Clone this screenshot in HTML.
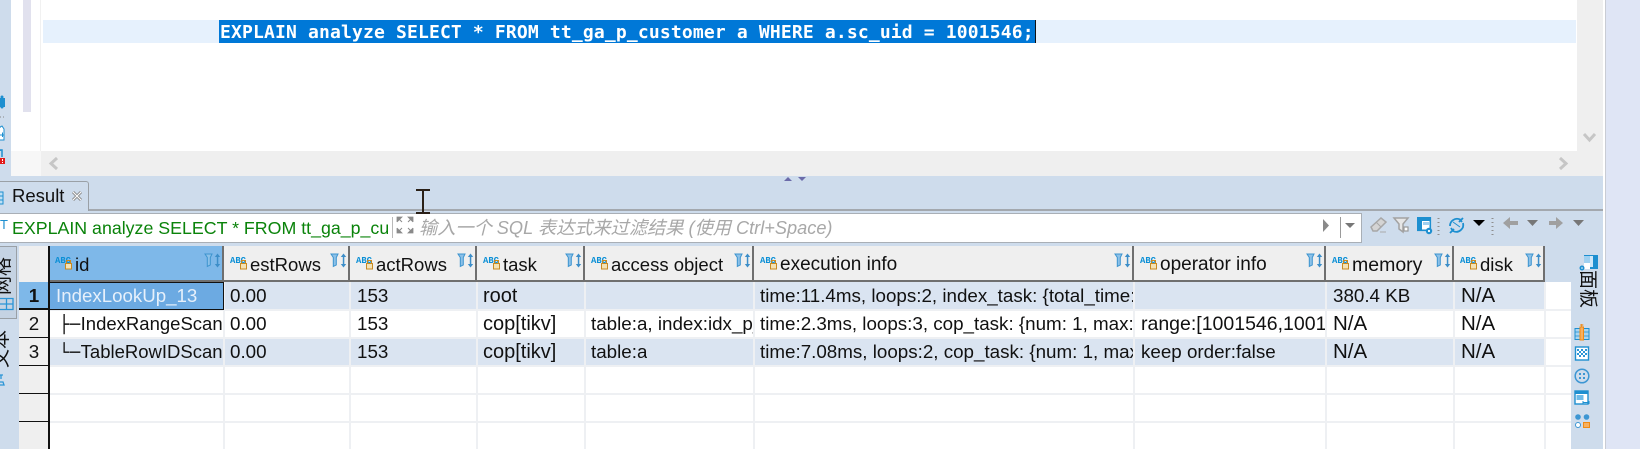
<!DOCTYPE html>
<html lang="zh"><head><meta charset="utf-8"><title>Result</title>
<style>
html,body{margin:0;padding:0;width:1640px;height:449px;overflow:hidden;background:#fff}
*{box-sizing:border-box}
#p{position:relative;width:1640px;height:449px;overflow:hidden;font-family:"Liberation Sans","Noto Sans CJK SC",sans-serif;font-size:18px;color:#111}
.a{position:absolute}
.t{position:absolute;white-space:nowrap;overflow:hidden;line-height:28px;height:28px;font-size:18.8px}
.h{position:absolute;top:246px;height:36px;background:#efefef;border-right:2px solid #6f6f6f;border-bottom:2px solid #6f6f6f}
.h span{position:absolute;left:26px;top:6px;line-height:26px;font-size:18.5px;white-space:nowrap}
.h svg{position:absolute;top:7px}
.h svg.i{top:8px}
.vl{position:absolute;top:282px;height:167px;width:2px;background:#eef0f3}
.hl{position:absolute;left:49px;width:1495px;height:2px;background:#eef0f3}
.rn{position:absolute;left:19px;width:30px;height:28px;background:#efefef;border-bottom:1px solid #111;text-align:center;line-height:28px;font-size:18.8px}
.n{font-size:20.5px}
.c{font-size:20px}
.e{font-size:18.8px}
</style></head><body><div id="p">
<svg width="0" height="0" style="position:absolute"><defs>
<symbol id="hi" viewBox="0 0 60 22">
<text x="0" y="9" font-family="Liberation Mono,monospace" font-weight="700" font-size="9.5" fill="#0a8fd6" textLength="16" lengthAdjust="spacingAndGlyphs">ABC</text>
<rect x="10.500" y="9.500" width="6" height="5.500" fill="#f4e2b4" stroke="#c78a22"/><path d="M11.500 9V6.500h4V9" fill="none" stroke="#c78a22"/>
</symbol>
<symbol id="fi" viewBox="0 0 18 15">
<path d="M1 1h7L6.300 4.500V12L3.300 13.500V4.500Z" fill="#8cc1e8" stroke="#3d94cf"/>
<path d="M13.500 0.500L10.800 4h5.400ZM13.500 14.500L10.800 11h5.400Z" fill="#3d8ec9"/><rect x="12.800" y="3" width="1.500" height="9" fill="#3d8ec9"/>
</symbol>
</defs></svg>

<!-- backgrounds -->
<div class="a" style="left:1606px;top:0;width:34px;height:449px;background:#dfe5f5"></div>
<div class="a" style="left:1605px;top:0;width:1px;height:449px;background:#c9ccd4"></div>
<div class="a" style="left:0;top:0;width:11px;height:176px;background:#cedcec"></div>
<div class="a" style="left:0;top:176px;width:1603px;height:273px;background:#cedcec"></div>

<!-- editor -->
<div class="a" style="left:11px;top:0;width:30px;height:151px;background:#fff;border-right:1px solid #f1f1f1"></div>
<div class="a" style="left:23px;top:0;width:8px;height:112px;background:#e1e1ee"></div>
<div class="a" style="left:43px;top:20px;width:1533px;height:23px;background:#e6f1fd"></div>
<div class="a" style="left:219px;top:20px;width:816px;height:23px;background:#0078d7"></div>
<div class="a" style="left:1035px;top:20px;width:1px;height:23px;background:#111"></div>
<div class="a" style="left:220px;top:21px;height:23px;line-height:23px;color:#fff;font-family:'DejaVu Sans Mono',monospace;font-weight:700;font-size:18px;letter-spacing:.16px;white-space:nowrap">EXPLAIN analyze SELECT * FROM tt_ga_p_customer a WHERE a.sc_uid = 1001546;</div>

<!-- scrollbars -->
<div class="a" style="left:1577px;top:0;width:26px;height:176px;background:#efefef"></div>
<div class="a" style="left:41px;top:151px;width:1562px;height:25px;background:#efefef"></div>
<div class="a" style="left:11px;top:151px;width:30px;height:25px;background:#f7f7f7"></div>
<svg class="a" style="left:48px;top:157px" width="12" height="13"><path d="M9 1L3 6.500L9 12" fill="none" stroke="#c6c6c6" stroke-width="3"/></svg>
<svg class="a" style="left:1557px;top:157px" width="12" height="13"><path d="M3 1L9 6.500L3 12" fill="none" stroke="#c6c6c6" stroke-width="3"/></svg>
<svg class="a" style="left:1583px;top:132px" width="13" height="11"><path d="M1 2L6.500 8L12 2" fill="none" stroke="#c6c6c6" stroke-width="3"/></svg>

<!-- left strip icons -->
<svg class="a" style="left:0;top:95px" width="11" height="70">
<rect x="0" y="3" width="5" height="9" fill="#1d8fd0"/><circle cx="2" cy="2" r="1.500" fill="#1d8fd0"/><circle cx="2" cy="12" r="1.500" fill="#1d8fd0"/>
<path d="M0 22h1M3 22h1" stroke="#888"/>
<path d="M0 33V32L2 31L4 34V45H0" fill="#fff" stroke="#1d8fd0"/><path d="M0 40H4M2.500 37.500V42" stroke="#1d8fd0"/>
<path d="M0 56V55H2V62" fill="none" stroke="#1d8fd0" stroke-width="1.500"/>
<rect x="0" y="63" width="5" height="6" fill="#e21b1b"/><rect x="2" y="64" width="1" height="2" fill="#fff"/><rect x="2" y="67" width="1" height="1" fill="#fff"/>
</svg>

<!-- splitter arrows -->
<svg class="a" style="left:783px;top:176px" width="24" height="6"><path d="M1 5L5 1L9 5ZM15 1H23L19 5Z" fill="#6b6ba9"/></svg>

<!-- tab -->
<div class="a" style="left:0;top:209px;width:1603px;height:2px;background:#a3a8ae"></div>
<div class="a" style="left:-2px;top:181px;width:91px;height:30px;background:#cedcec;border:1px solid #9aa0a6;border-bottom:none;border-top-right-radius:3px"></div>
<svg class="a" style="left:0;top:190px" width="5" height="16"><path d="M0 2h3v12H0" fill="#bfe0f5" stroke="#1d8fd0"/><path d="M0 6h3M0 10h3" stroke="#1d8fd0"/></svg>
<div class="a" style="left:12px;top:183px;line-height:26px;font-size:18.5px;color:#111">Result</div>
<svg class="a" style="left:71px;top:190px" width="12" height="12"><path d="M2 2L10 10M10 2L2 10" stroke="#8b8b8b" stroke-width="3"/><path d="M2 2L10 10M10 2L2 10" stroke="#fff" stroke-width="1"/></svg>

<!-- filter bar -->
<div class="a" style="left:0;top:213px;width:1362px;height:30px;background:#fff;border:1px solid #a9afb6;border-left:none"></div>
<div class="a" style="left:0;top:219px;font-size:13px;line-height:12px;color:#1d8fd0">T</div>
<div class="t" style="left:12px;top:214px;width:376px;color:#0a830a;font-size:17.8px;">EXPLAIN analyze SELECT * FROM tt_ga_p_customer a WHERE</div>
<div class="a" style="left:392px;top:217px;width:1px;height:21px;background:#b9b9b9"></div>
<svg class="a" style="left:396px;top:216px" width="18" height="18"><path d="M1 6V1H6L1 6M17 6V1H12L17 6M1 12V17H6L1 12M17 12V17H12L17 12" fill="#8a8a8a" stroke="#8a8a8a" stroke-width=".8"/><path d="M2 2L6 6M16 2L12 6M2 16L6 12M16 16L12 12" stroke="#8a8a8a"/></svg>
<div class="t" style="left:419px;top:214px;width:800px;color:#a8a8a8;font-style:italic;font-size:18.2px;">输入一个 SQL 表达式来过滤结果 (使用 Ctrl+Space)</div>
<svg class="a" style="left:1320px;top:216px" width="40" height="24"><path d="M3 3L9 9.500L3 16Z" fill="#8a8a8a"/><rect x="20" y="1" width="1" height="21" fill="#9a9a9a"/><path d="M25 7H35L30 12Z" fill="#777"/></svg>

<!-- toolbar icons -->
<svg class="a" style="left:1368px;top:212px" width="100" height="28">
<path d="M3 15L13 6L18 10L9 19H5Z" fill="#d4d4d4" stroke="#a7a7a7" stroke-width="1.500"/><path d="M8 10L13 15" stroke="#a7a7a7"/><path d="M12 20h6" stroke="#aaa"/>
<path d="M26 6H40L35 12V20L31 17V12Z" fill="#e6e6e6" stroke="#a2a2a2" stroke-width="1.500"/><rect x="36" y="15" width="4" height="4" fill="#fff" stroke="#9a9a9a" stroke-width="1.200"/>
<rect x="49.800" y="5.800" width="12.500" height="12.500" fill="#fff" stroke="#1d8fd0" stroke-width="1.600"/><rect x="50" y="6" width="12" height="3" fill="#1d8fd0"/><rect x="50" y="9" width="4" height="9" fill="#1d8fd0"/><rect x="55" y="10" width="6" height="3" fill="#9fd0f0"/><circle cx="61" cy="19" r="3.200" fill="#1d8fd0"/><circle cx="61" cy="19" r="1.100" fill="#fff"/>
<path d="M70.500 6v1M70.500 10v1M70.500 14v1M70.500 18v1M70.500 22v1" stroke="#8e8e8e" stroke-width="2"/>
<path d="M82 14A7 7 0 0 1 92 7.500L94 10M91 10L95 6M95 11A7 7 0 0 1 85 19L83 16M86 17L82 21" fill="none" stroke="#1d8fd0" stroke-width="1.800"/><path d="M85 10L92 15" stroke="#1d8fd0"/>
</svg>
<svg class="a" style="left:1465px;top:212px" width="138" height="28">
<path d="M8 8H20L14 14Z" fill="#000"/>
<path d="M27.500 6v1M27.500 10v1M27.500 14v1M27.500 18v1M27.500 22v1" stroke="#8e8e8e" stroke-width="2"/>
<path d="M38 11L45 5V9H53V13H45V17Z" fill="#a0a0a0"/>
<path d="M62 8H73L67.500 14Z" fill="#777"/>
<path d="M98 11L91 5V9H84V13H91V17Z" fill="#a0a0a0"/>
<path d="M108 8H119L113.500 14Z" fill="#777"/>
</svg>

<!-- table headers -->
<div class="a" style="left:19px;top:246px;width:30px;height:36px;background:#efefef"></div>
<div class="h" style="left:49px;width:175px;background:#7eb8e9"><svg class="i" style="left:6px" width="60" height="22"><use href="#hi"/></svg><span>id</span><svg style="left:155px" width="18" height="15"><use href="#fi"/></svg></div>
<div class="h" style="left:224px;width:126px"><svg class="i" style="left:6px" width="60" height="22"><use href="#hi"/></svg><span>estRows</span><svg style="left:106px" width="18" height="15"><use href="#fi"/></svg></div>
<div class="h" style="left:350px;width:127px"><svg class="i" style="left:6px" width="60" height="22"><use href="#hi"/></svg><span>actRows</span><svg style="left:107px" width="18" height="15"><use href="#fi"/></svg></div>
<div class="h" style="left:477px;width:108px"><svg class="i" style="left:6px" width="60" height="22"><use href="#hi"/></svg><span>task</span><svg style="left:88px" width="18" height="15"><use href="#fi"/></svg></div>
<div class="h" style="left:585px;width:169px"><svg class="i" style="left:6px" width="60" height="22"><use href="#hi"/></svg><span>access object</span><svg style="left:149px" width="18" height="15"><use href="#fi"/></svg></div>
<div class="h" style="left:754px;width:380px"><svg class="i" style="left:6px" width="60" height="22"><use href="#hi"/></svg><span style="font-size:19px">execution info</span><svg style="left:360px" width="18" height="15"><use href="#fi"/></svg></div>
<div class="h" style="left:1134px;width:192px"><svg class="i" style="left:6px" width="60" height="22"><use href="#hi"/></svg><span style="font-size:19px">operator info</span><svg style="left:172px" width="18" height="15"><use href="#fi"/></svg></div>
<div class="h" style="left:1326px;width:128px"><svg class="i" style="left:6px" width="60" height="22"><use href="#hi"/></svg><span style="font-size:19.500px">memory</span><svg style="left:108px" width="18" height="15"><use href="#fi"/></svg></div>
<div class="h" style="left:1454px;width:91px"><svg class="i" style="left:6px" width="60" height="22"><use href="#hi"/></svg><span>disk</span><svg style="left:71px" width="18" height="15"><use href="#fi"/></svg></div>

<!-- table body -->
<div class="a" style="left:19px;top:282px;width:30px;height:167px;background:#efefef"></div>
<div class="a" style="left:49px;top:282px;width:1522px;height:167px;background:#fff"></div>
<div class="a" style="left:49px;top:282px;width:1495px;height:27px;background:#dae4f1"></div>
<div class="a" style="left:49px;top:338px;width:1495px;height:27px;background:#dae4f1"></div>
<div class="hl" style="top:309px;width:1522px"></div><div class="hl" style="top:337px;width:1522px"></div><div class="hl" style="top:365px;width:1522px"></div><div class="hl" style="top:393px;width:1522px"></div><div class="hl" style="top:421px;width:1522px"></div>
<div class="vl" style="left:223px"></div><div class="vl" style="left:349px"></div><div class="vl" style="left:476px"></div><div class="vl" style="left:584px"></div><div class="vl" style="left:753px"></div><div class="vl" style="left:1133px"></div><div class="vl" style="left:1325px"></div><div class="vl" style="left:1453px"></div><div class="vl" style="left:1544px"></div>

<div class="rn" style="top:282px;background:#7eb8e9;font-weight:700">1</div>
<div class="rn" style="top:310px">2</div>
<div class="rn" style="top:338px">3</div>
<div class="rn" style="top:366px"></div>
<div class="rn" style="top:394px"></div>
<div class="a" style="left:48px;top:246px;width:2px;height:203px;background:#111"></div>
<div class="a" style="left:19px;top:308px;width:30px;height:1px;background:#111"></div>

<div class="a" style="left:49px;top:282px;width:175px;height:28px;background:#6caae2;border:1px solid #111"></div>
<div class="t" style="left:56px;top:282px;width:165px;color:#e6f0fb;font-size:18.7px">IndexLookUp_13</div>
<div class="t" style="left:59px;top:310px;width:165px;font-size:18.5px"><span style="font-family:'DejaVu Sans Mono',monospace;font-size:17px;letter-spacing:.6px">├─</span>IndexRangeScan</div>
<div class="t" style="left:59px;top:338px;width:165px;font-size:18.5px"><span style="font-family:'DejaVu Sans Mono',monospace;font-size:17px;letter-spacing:.6px">└─</span>TableRowIDScan</div>

<div class="t" style="left:230px;top:282px">0.00</div><div class="t" style="left:230px;top:310px">0.00</div><div class="t" style="left:230px;top:338px">0.00</div>
<div class="t" style="left:357px;top:282px">153</div><div class="t" style="left:357px;top:310px">153</div><div class="t" style="left:357px;top:338px">153</div>
<div class="t c" style="left:483px;top:282px">root</div><div class="t c" style="left:483px;top:310px">cop[tikv]</div><div class="t c" style="left:483px;top:338px">cop[tikv]</div>
<div class="t" style="left:591px;top:310px;width:162px">table:a, index:idx_p_customer</div><div class="t" style="left:591px;top:338px">table:a</div>
<div class="t e" style="left:760px;top:282px;width:373px">time:11.4ms, loops:2, index_task: {total_time: 5.1ms}</div>
<div class="t e" style="left:760px;top:310px;width:373px">time:2.3ms, loops:3, cop_task: {num: 1, max: 2.2ms}</div>
<div class="t e" style="left:760px;top:338px;width:373px">time:7.08ms, loops:2, cop_task: {num: 1, max: 7ms}</div>
<div class="t" style="left:1141px;top:310px;width:184px;font-size:19.5px">range:[1001546,1001546], keep order:false</div>
<div class="t" style="left:1141px;top:338px">keep order:false</div>
<div class="t" style="left:1333px;top:282px">380.4 KB</div><div class="t n" style="left:1333px;top:310px">N/A</div><div class="t n" style="left:1333px;top:338px">N/A</div>
<div class="t n" style="left:1461px;top:282px">N/A</div><div class="t n" style="left:1461px;top:310px">N/A</div><div class="t n" style="left:1461px;top:338px">N/A</div>

<!-- left vertical tabs -->
<div class="a" style="left:-2px;top:246px;width:19px;height:73px;background:#c5d3e3;border:1px solid #9aa0a6"></div>
<div class="a" style="left:-6px;top:255px;width:20px;height:40px;font-size:19px;line-height:20px;writing-mode:vertical-rl;text-orientation:sideways;transform:rotate(180deg);white-space:nowrap">网格</div>
<svg class="a" style="left:0;top:297px" width="15" height="14"><path d="M0 1.500H13V12.500H0M6.500 1.500V12.500M0 7H13" fill="none" stroke="#2b95d6" stroke-width="1.300"/></svg>
<div class="a" style="left:-8px;top:328px;width:20px;height:40px;font-size:19px;line-height:20px;writing-mode:vertical-rl;text-orientation:sideways;transform:rotate(180deg);white-space:nowrap">文本</div>
<svg class="a" style="left:0;top:373px" width="8" height="14"><path d="M0 2h3M1 2v4M0 9h3l1 3H0" fill="none" stroke="#2b95d6" stroke-width="1.300"/></svg>

<!-- right panel -->
<svg class="a" style="left:1571px;top:253px" width="32" height="195">
<rect x="13" y="2" width="14" height="14" fill="#1d8fd0"/><rect x="13" y="3" width="6" height="7" fill="#9fd0f0"/><rect x="19" y="3" width="3" height="11" fill="#cfe7f8"/><rect x="13" y="10" width="6" height="6" fill="#fff"/><circle cx="11" cy="15" r="2.500" fill="#1d8fd0"/><circle cx="11" cy="15" r=".8" fill="#fff"/>
<rect x="4" y="75.500" width="14" height="11" fill="#a8d5f2" stroke="#1d8fd0"/><path d="M4 79h14M4 83h14" stroke="#1d8fd0" stroke-width=".8"/><rect x="9" y="74" width="3.500" height="13" fill="#f7b060" stroke="#f08a14"/><path d="M10.700 71v3M9 72h3.400" stroke="#f08a14"/>
<rect x="4.500" y="94" width="13" height="13" fill="#fff" stroke="#1d8fd0" stroke-width="1.400"/><path d="M6 96h2v2H6zM10 96h2v2h-2zM14 96h2v2h-2zM8 98h2v2H8zM12 98h2v2h-2zM6 100h2v2H6zM10 100h2v2h-2zM14 100h2v2h-2zM8 102h2v2H8zM12 102h2v2h-2z" fill="#2b95d6"/>
<circle cx="11" cy="123" r="6.800" fill="#cedcec" stroke="#3c96d3" stroke-width="1.500"/><path d="M8 120h2v2H8zM12 120h2v2h-2zM8 124h2v2H8zM12 124h2v2h-2z" fill="#3c96d3"/>
<rect x="4" y="138" width="13" height="13" fill="#fff" stroke="#1d8fd0" stroke-width="1.400"/><rect x="4" y="138" width="13" height="3" fill="#1d8fd0"/><rect x="5.500" y="142" width="7" height="5" fill="#6dbbe9"/><path d="M12 149.500h6M12 148v3M18 148v3" stroke="#1d8fd0"/>
<circle cx="7" cy="164" r="2.800" fill="#3c96d3"/><circle cx="15.500" cy="164" r="2.800" fill="#3c96d3"/><circle cx="7" cy="172" r="2.500" fill="#fff" stroke="#3c96d3"/><rect x="12.500" y="169.500" width="6" height="5" fill="#f7b060" stroke="#f08a14"/>
</svg>
<div class="a" style="left:1577px;top:270px;width:20px;height:40px;font-size:19px;line-height:20px;writing-mode:vertical-rl;text-orientation:sideways;white-space:nowrap">面板</div>

<!-- cursor -->
<svg class="a" style="left:414px;top:187px" width="18" height="29"><path d="M2 3H16M9 3V26M2 26H16" stroke="#2a2017" stroke-width="2"/></svg>
</div></body></html>
